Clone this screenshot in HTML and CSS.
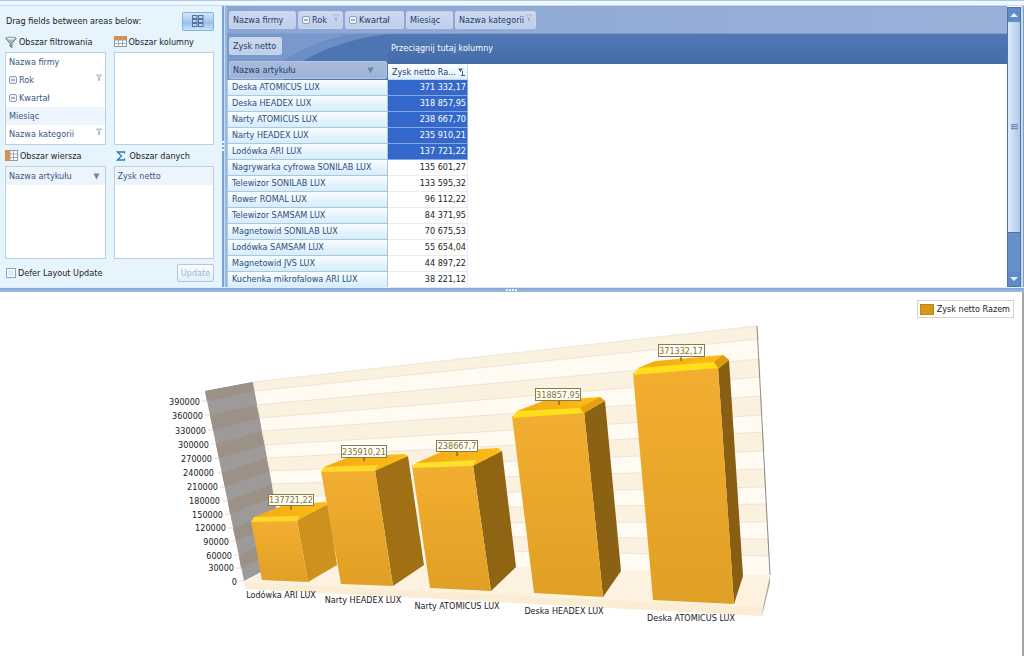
FILE: index.html
```html
<!DOCTYPE html>
<html lang="pl">
<head>
<meta charset="utf-8">
<title>Zysk netto</title>
<link rel="stylesheet" href="styles.css">
</head>
<body>
<svg class="defs" aria-hidden="true">
  <symbol id="funnel" viewBox="0 0 12 12"><path d="M1 1.800 7 7v4.500l-2-1.200V7z" fill="#8494a0"/><path d="M.8 2.500C.8.8 11.200.8 11.200 2.500L7 7.300v4.200L5 10.300v-3z" fill="#aab8c2" stroke="#5c6c7a" stroke-width=".9"/><ellipse cx="6" cy="2.500" rx="4" ry="1" fill="#e9f1f6"/></symbol>
  <symbol id="pin" viewBox="0 0 6 7"><path d="M.5 1h5L3.500 3.500v3h-1v-3z" fill="#eef3f8" stroke="#93a5bd" stroke-width=".8"/></symbol>
  <symbol id="minus" viewBox="0 0 8 8"><rect x=".5" y=".5" width="7" height="7" rx="1.500" fill="#eef3fb" stroke="#8b9dbf"/><path d="M2 4h4" stroke="#5a72a3"/></symbol>
  <symbol id="down" viewBox="0 0 7 7"><path d="M.5.500h6L3.500 6.500z" fill="#6787b0"/></symbol>
</svg>
<div class="app">
  <div class="topstrip"></div>
  <div class="workspace">
    <aside class="fields">
      <div class="intro"><span>Drag fields between areas below:</span>
        <button class="layout" aria-label="Layout"><svg width="12" height="12" viewBox="0 0 12 12" fill="#bcd3ee" stroke="#54749f"><rect x=".5" y=".5" width="4.500" height="3"/><rect x="6.500" y=".5" width="4.500" height="3"/><rect x=".5" y="4.500" width="4.500" height="3"/><rect x="6.500" y="4.500" width="4.500" height="3"/><rect x=".5" y="8.500" width="4.500" height="3"/><rect x="6.500" y="8.500" width="4.500" height="3"/></svg></button>
      </div>
      <div class="areas">
        <section>
          <h2><svg width="12" height="12"><use href="#funnel"/></svg>Obszar filtrowania</h2>
          <ul class="box">
            <li>Nazwa firmy</li>
            <li><svg width="8" height="8"><use href="#minus"/></svg>Rok<svg class="pin" width="6" height="7"><use href="#pin"/></svg></li>
            <li><svg width="8" height="8"><use href="#minus"/></svg>Kwartał</li>
            <li class="tint">Miesiąc</li>
            <li>Nazwa kategorii<svg class="pin" width="6" height="7"><use href="#pin"/></svg></li>
          </ul>
        </section>
        <section>
          <h2><svg width="13" height="11" viewBox="0 0 13 11"><rect x=".5" y=".5" width="12" height="10" fill="#fff" stroke="#8b97a5"/><path d="M0 0h13v4H0z" fill="#e88a2c"/><path d="M4.500 0v11M8.500 0v11M0 4h13M0 7.500h13" stroke="#9aa9b8"/></svg>Obszar kolumny</h2>
          <ul class="box"></ul>
        </section>
        <section>
          <h2><svg width="13" height="11" viewBox="0 0 13 11"><rect x=".5" y=".5" width="12" height="10" fill="#fff" stroke="#8b97a5"/><path d="M0 0h5v11H0z" fill="#e88a2c"/><path d="M5 0v11M8.500 0v11M0 4h13M0 7.500h13" stroke="#9aa9b8"/></svg>Obszar wiersza</h2>
          <ul class="box">
            <li class="tint">Nazwa artykułu<svg class="arrow" width="7" height="7"><use href="#down"/></svg></li>
          </ul>
        </section>
        <section>
          <h2><svg class="sigma" width="10" height="10" viewBox="0 0 10 10"><path d="M8.500 2.500V1H1.500L5.500 5 1.500 9h7V7.500" fill="none" stroke="#2f7fae" stroke-width="1.300"/></svg>Obszar danych</h2>
          <ul class="box"><li class="tint">Zysk netto</li></ul>
        </section>
      </div>
      <div class="foot">
        <label><input type="checkbox">Defer Layout Update</label>
        <button class="update" disabled>Update</button>
      </div>
    </aside>
    <div class="vsplit"><i></i></div>
    <main class="pivot">
      <div class="filters">
        <button class="chip wide">Nazwa firmy</button>
        <button class="chip narrow"><svg width="8" height="8"><use href="#minus"/></svg>Rok<svg class="pin" width="6" height="7"><use href="#pin"/></svg></button>
        <button class="chip mid"><svg width="8" height="8"><use href="#minus"/></svg>Kwartał</button>
        <button class="chip small">Miesiąc</button>
        <button class="chip last">Nazwa kategorii<svg class="pin" width="6" height="7"><use href="#pin"/></svg></button>
      </div>
      <div class="gridarea">
        <table>
          <thead><tr>
            <th class="corner">
              <svg class="swoosh" viewBox="0 0 161 46" preserveAspectRatio="none" aria-hidden="true"><path d="M0 0h161C128 4 98 14 76 27L56 46H0z" fill="#6b8ec5"/><path d="M0 0h123C98 5 76 14 58 25L34 46H0z" fill="#7998cb"/></svg>
              <div class="cornerbody">
                <button class="chip data">Zysk netto</button>
                <button class="chip rowfield">Nazwa artykułu<svg width="7" height="7"><use href="#down"/></svg></button>
              </div>
            </th>
            <th class="total">
              <div class="hint">Przeciągnij tutaj kolumny</div>
              <div class="colhead">Zysk netto Ra...<svg width="7" height="8" viewBox="0 0 7 8"><path d="M0 .5h5L2.500 4z" fill="#3f628f"/><path d="M4.500 3v4M3 7.500h4" stroke="#3f628f"/></svg></div>
            </th>
          </tr></thead>
          <tbody>
            <tr class="sel"><th>Deska ATOMICUS LUX</th><td>371 332,17</td></tr>
            <tr class="sel"><th>Deska HEADEX LUX</th><td>318 857,95</td></tr>
            <tr class="sel"><th>Narty ATOMICUS LUX</th><td>238 667,70</td></tr>
            <tr class="sel"><th>Narty HEADEX LUX</th><td>235 910,21</td></tr>
            <tr class="sel"><th>Lodówka ARI LUX</th><td>137 721,22</td></tr>
            <tr><th>Nagrywarka cyfrowa SONILAB LUX</th><td>135 601,27</td></tr>
            <tr><th>Telewizor SONILAB LUX</th><td>133 595,32</td></tr>
            <tr><th>Rower ROMAL LUX</th><td>96 112,22</td></tr>
            <tr><th>Telewizor SAMSAM LUX</th><td>84 371,95</td></tr>
            <tr><th>Magnetowid SONILAB LUX</th><td>70 675,53</td></tr>
            <tr><th>Lodówka SAMSAM LUX</th><td>55 654,04</td></tr>
            <tr><th>Magnetowid JVS LUX</th><td>44 897,22</td></tr>
            <tr><th>Kuchenka mikrofalowa ARI LUX</th><td>38 221,12</td></tr>
          </tbody>
        </table>
      </div>
    </main>
    <div class="scroll">
      <button class="sbtn" aria-label="Scroll up"><svg width="8" height="4" viewBox="0 0 8 4"><path d="M0 4 4 0l4 4z" fill="#e6f2fd"/></svg></button>
      <div class="thumb"><i></i></div>
      <div class="track"></div>
      <button class="sbtn" aria-label="Scroll down"><svg width="8" height="4" viewBox="0 0 8 4"><path d="M0 0h8L4 4z" fill="#e6f2fd"/></svg></button>
    </div>
    <div class="edge"></div>
  </div>
  <div class="hsplit"><i></i></div>
  <section class="chart">
    <svg class="plot" viewBox="0 292 1022 364" role="img" aria-label="Zysk netto Razem">
      <defs>
        <linearGradient id="front" x1="0" y1="0" x2="0" y2="1"><stop offset="0" stop-color="#f2ae30"/><stop offset="1" stop-color="#e0a025"/></linearGradient>
        <linearGradient id="cap" x1="0" y1="0" x2="1" y2="0"><stop offset="0" stop-color="#f3aa14"/><stop offset="1" stop-color="#fcbc18"/></linearGradient>
      </defs>
      <path d="M205 391 253 382 286 559 244 581z" fill="#9d9a99"/>
      <path fill="#9c9186" d="M205 391 253 382 255 391 207 401zM210 415 257 405 260 418 213 430zM216 444 262 431 265 445 219 458zM222 473 267 458 270 471 225 487zM228 501 272 484 274 497 230 514zM233 528 277 510 279 523 236 541zM239 555 282 535 284 547 241 568z"/>
      <path d="M253 382 757 326 770 575 286 559z" fill="#fffbf3"/>
      <path fill="#fbf1df" stroke="#e5dccd" stroke-width=".7" d="M253 382 757 326 758 339 255 391zM257 405 759 359 760 377 260 418zM262 431 761 396 762 415 265 445zM267 458 763 432 764 451 270 471zM272 484 765 469 765 487 274 497zM277 510 766 504 767 522 279 523zM282 535 768 539 769 556 284 547z"/>
      <path d="M757 326 770 575" stroke="#8e8a85"/>
      <path d="M244 582 286 559 770 575 763 607z" fill="#fdf2e0"/>
      <path d="M244 582 763 607 762 616 246 589z" fill="#fbecd4"/>
      <path d="M763 607 770 575 770 583 762 616z" fill="#b8ad9b"/>
      <path stroke="#ead8bf" d="M202 401h5M205 415h5M208 430h5M211 444h5M214 458h5M217 473h5M220 487h5M223 501h5M225 514h5M228 528h5M231 541h5M234 555h5M236 568h5M239 581h5"/>

      <g>
        <path d="M297 520 328 504 337 565 308 582z" fill="#cf911d"/>
        <path d="M251 521 297 520 308 582 262 580z" fill="url(#front)"/>
        <path d="M254 517 284 505 325 502 328 504 297 521z" fill="url(#cap)"/>
        <path d="M251 522 254 517 299 516 297 521z" fill="#ffd92c"/>
      </g>
      <g>
        <path d="M375 470 408 456 424 565 393 586z" fill="#a07014"/>
        <path d="M321 471 375 470 393 586 341 584z" fill="url(#front)"/>
        <path d="M324 467 349 457 404 454 408 456 375 471z" fill="url(#cap)"/>
        <path d="M321 472 324 467 378 465 375 471z" fill="#ffd92c"/>
      </g>
      <g>
        <path d="M473 465 502 451 516 567 491 591z" fill="#8f6514"/>
        <path d="M412 466 473 465 491 591 430 588z" fill="url(#front)"/>
        <path d="M416 463 441 452 498 448 502 451 473 466z" fill="url(#cap)"/>
        <path d="M412 468 416 463 476 460 473 466z" fill="#ffe02c"/>
      </g>
      <g>
        <path d="M584 411 605 401 621 571 603 597z" fill="#8b6213"/>
        <path d="M512 416 584 411 603 597 534 593z" fill="url(#front)"/>
        <path d="M517 411 543 401 600 397 605 401 584 413z" fill="url(#cap)"/>
        <path d="M512 418 517 411 580 408 584 413z" fill="#ffdf1c"/><path d="M580 408 600 397 605 401 584 413z" fill="#e3a010"/>
      </g>
      <g>
        <path d="M718 367 729 360 743 576 734 604z" fill="#875e12"/>
        <path d="M633 373 718 366 734 604 653 600z" fill="url(#front)"/>
        <path d="M638 368 655 361 723 355 729 360 718 369z" fill="url(#cap)"/>
        <path d="M633 375 638 368 714 362 718 368z" fill="#ffdf1c"/><path d="M714 362 723 355 729 360 718 368z" fill="#dc9b10"/>
      </g>
      <path d="M291 506v4M364 457v4M457 452v4M559 401v4M681 357v4" stroke="#5d430b"/>
      <g fill="#fffef8" stroke="#857c4c">
        <rect x="268.500" y="494.500" width="45" height="11"/><rect x="341.500" y="445.500" width="45" height="12"/><rect x="436.500" y="440.500" width="41" height="11"/><rect x="535.500" y="388.500" width="45" height="12"/><rect x="658.500" y="344.500" width="46" height="12"/>
      </g>
      <g class="val">
        <text x="291" y="503">137721,22</text><text x="364" y="455">235910,21</text><text x="457" y="449">238667,7</text><text x="558" y="398">318857,95</text><text x="681" y="354">371332,17</text>
      </g>
      <g class="axis">
        <text x="200" y="405">390000</text><text x="203" y="419">360000</text><text x="206" y="434">330000</text><text x="209" y="448">300000</text><text x="212" y="462">270000</text><text x="214" y="476">240000</text><text x="218" y="490">210000</text><text x="220" y="504">180000</text><text x="223" y="518">150000</text><text x="226" y="531">120000</text><text x="229" y="545">90000</text><text x="232" y="559">60000</text><text x="234" y="571">30000</text><text x="237" y="585">0</text>
      </g>
      <g class="cat">
        <text x="281" y="598">Lodówka ARI LUX</text><text x="363" y="603">Narty HEADEX LUX</text><text x="457" y="609">Narty ATOMICUS LUX</text><text x="564" y="614">Deska HEADEX LUX</text><text x="691" y="621">Deska ATOMICUS LUX</text>
      </g>
    </svg>
    <div class="legend"><i></i>Zysk netto Razem</div>
  </section>
</div>
</body>
</html>
```
FILE: styles.css
```css
* { box-sizing: border-box; }
body { margin: 0; background: #fff; color: #1c1c1c; font: 9px/12px "DejaVu Sans Condensed", "DejaVu Sans", sans-serif; }
button { font: inherit; color: inherit; margin: 0; padding: 0; }
svg { display: block; flex: none; }
.defs { position: absolute; width: 0; height: 0; }
.app { min-height: 100vh; display: flex; flex-direction: column; }
.topstrip { height: 6px; background: #eef8fe; border-top: 1px solid #adc8e4; border-bottom: 1px solid #c5dcee; }
.workspace { display: flex; height: 281px; }

.fields { width: 222px; background: #e6f4fd; padding: 5px 8px 0 5px; display: flex; flex-direction: column; }
.intro { display: flex; justify-content: space-between; align-items: center; height: 20px; padding-left: 1px; }
.layout { width: 32px; height: 19px; display: flex; align-items: center; justify-content: center; border: 1px solid #8bafd6; border-radius: 2px; background: linear-gradient(#d4e7fa, #a3c8ee 50%, #8fbceb 51%, #c9e4fa); }
.areas { display: grid; grid-template-columns: 1fr 1fr; column-gap: 8px; }
h2 { margin: 0; height: 21px; font: inherit; display: flex; align-items: center; gap: 2px; }
h2 .sigma { margin: 0 2px 0 2px; }
.box { margin: 0; padding: 0; list-style: none; height: 93px; background: #fff; border: 1px solid #bccfdf; }
.box li { display: flex; align-items: center; gap: 2px; height: 18px; padding: 0 3px; color: #37558a; }
.box .tint { background: #edf4fb; }
.box .pin { margin: -6px 0 0 auto; }
.box .arrow { margin: 0 2px 0 auto; }
.foot { display: flex; justify-content: space-between; align-items: center; padding: 5px 0 0 1px; }
.foot label { display: flex; align-items: center; gap: 2px; }
.foot input { appearance: none; width: 10px; height: 10px; margin: 0; border: 1px solid #8ba6c4; background: #e2ecf5; box-shadow: inset 0 0 0 1px #fff; }
.update { width: 37px; height: 18px; border: 1px solid #b5c6de; border-radius: 2px; background: linear-gradient(#fbfdff, #e2effa); color: #a5b6d2; }

.vsplit { width: 5px; display: flex; align-items: center; background: linear-gradient(90deg, #7ba3d4 0 2px, #c7dcf0 2px 3px, #98b9dd 3px); }
.vsplit i { width: 2px; height: 12px; background: repeating-linear-gradient(#eef6fd 0 2px, transparent 2px 4px); }
.pivot { flex: 1; min-width: 0; display: flex; flex-direction: column; border-top: 1px solid #8ba7ce; background: #fff; overflow: hidden; }
.filters { display: flex; align-items: center; gap: 2px; height: 27px; padding: 0 2px; background: linear-gradient(90deg, #8aa6d4, #9bb1da); flex: none; border-bottom: 1px solid #7f9cca; }
.chip { display: flex; align-items: center; gap: 2px; height: 18px; padding: 0 3px; border: 1px solid #c6d4ec; border-radius: 2px; background: linear-gradient(#ced9ef, #bfcee9); color: #23406f; white-space: nowrap; }
.wide { width: 67px; }
.narrow { width: 45px; }
.mid { width: 59px; }
.small { width: 47px; }
.last { width: 81px; }
.chip .pin { margin: -6px 0 0 auto; }
.gridarea { flex: 1; background: linear-gradient(#5179b5, #446ca9) 0 0 / 100% 30px no-repeat #fff; overflow: hidden; }
table { border-collapse: separate; border-spacing: 0; table-layout: fixed; width: 241px; }
th, td { padding: 0; font-weight: normal; }
.corner { position: relative; width: 161px; height: 46px; background: #4c75b2; }
.swoosh { position: absolute; inset: 0; width: 100%; height: 100%; }
.cornerbody { position: relative; display: flex; flex-direction: column; align-items: flex-start; justify-content: space-between; height: 46px; padding: 3px 1px 1px 2px; }
.data { width: 53px; }
.rowfield { width: 100%; justify-content: space-between; padding-right: 12px; border-color: #b3c3e0; background: linear-gradient(#a9bbdc, #9db2d7); }
.total { vertical-align: top; text-align: left; }
.hint { height: 30px; padding-left: 3px; line-height: 29px; color: #fff; white-space: nowrap; }
.colhead { display: flex; align-items: center; justify-content: space-between; height: 16px; padding: 0 2px 0 4px; white-space: nowrap; color: #23406f; background: linear-gradient(#fff, #dceefa); border: 1px solid #c0d6e8; border-width: 0 1px 1px 0; }
tbody th, tbody td { height: 16px; line-height: 15px; white-space: nowrap; }
tbody th { text-align: left; padding-left: 4px; color: #2b4d7c; background: linear-gradient(#f8fdff, #d6edfb); border-bottom: 1px solid #a9c7e0; border-right: 1px solid #a9c7e0; border-left: 1px solid #a9c7e0; }
tbody td { text-align: right; padding-right: 1px; border-bottom: 1px solid #eee9ee; border-right: 1px solid #eee9ee; }
.sel td { background: #3468cb; color: #fff; border-color: #87a7e2; }

.scroll { width: 14px; display: flex; flex-direction: column; background: #6690ca; border: 1px solid #4d74ac; margin-top: 1px; }
.sbtn { height: 14px; border: 0; background: #5f8bc8; display: flex; align-items: center; justify-content: center; flex: none; }
.thumb { flex: 16; display: flex; align-items: center; justify-content: center; background: linear-gradient(90deg, #dcebfa, #c1d5ee 60%, #b1c6e4); border-bottom: 1px solid #4a70a8; border-radius: 1px; }
.thumb i { width: 7px; height: 6px; background: repeating-linear-gradient(#6d8ebc 0 1px, #a9c0df 1px 2px); }
.track { flex: 3; }
.edge { width: 3px; background: #c3daf0; border-right: 1px solid #8d9db0; }
.hsplit { height: 5px; display: flex; align-items: center; justify-content: center; border-top: 1px solid #dcecf9; background: linear-gradient(#7fa3d4, #a0bfe2); }
.hsplit i { width: 12px; height: 2px; background: repeating-linear-gradient(90deg, #eef6fd 0 2px, transparent 2px 3px); }

.chart { position: relative; flex: 1; border-right: 2px solid #a3a5aa; background: #fff; }
.plot { width: 100%; height: auto; }
.plot text { font-size: 9px; fill: #202020; }
.plot .val text { fill: #85702f; text-anchor: middle; }
.plot .axis text { text-anchor: end; }
.plot .cat text { text-anchor: middle; }
.legend { position: absolute; top: 8px; right: 8px; display: flex; align-items: center; gap: 3px; height: 18px; padding: 0 3px 0 2px; border: 1px solid #d9d3c4; background: #fff; }
.legend i { width: 14px; height: 11px; background: #d6981a; border: 1px solid #c08510; }
```
